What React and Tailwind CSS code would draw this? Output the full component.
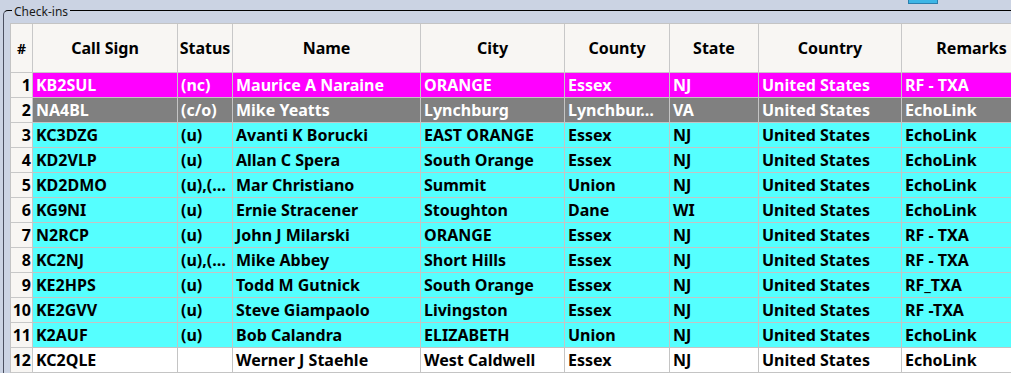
import React from "react";

const cols = "grid-cols-[22px_145px_55px_188px_144px_105px_89px_143px_140px]";

const headers = ["Call Sign", "Status", "Name", "City", "County", "State", "Country", "Remarks"];

const rows = [
  ["KB2SUL", "(nc)", "Maurice A Naraine", "ORANGE", "Essex", "NJ", "United States", "RF - TXA", "m"],
  ["NA4BL", "(c/o)", "Mike Yeatts", "Lynchburg", "Lynchbur…", "VA", "United States", "EchoLink", "g"],
  ["KC3DZG", "(u)", "Avanti K Borucki", "EAST ORANGE", "Essex", "NJ", "United States", "EchoLink", "c"],
  ["KD2VLP", "(u)", "Allan C Spera", "South Orange", "Essex", "NJ", "United States", "EchoLink", "c"],
  ["KD2DMO", "(u),(…", "Mar Christiano", "Summit", "Union", "NJ", "United States", "EchoLink", "c"],
  ["KG9NI", "(u)", "Ernie Stracener", "Stoughton", "Dane", "WI", "United States", "EchoLink", "c"],
  ["N2RCP", "(u)", "John J Milarski", "ORANGE", "Essex", "NJ", "United States", "RF - TXA", "c"],
  ["KC2NJ", "(u),(…", "Mike Abbey", "Short Hills", "Essex", "NJ", "United States", "RF - TXA", "c"],
  ["KE2HPS", "(u)", "Todd M Gutnick", "South Orange", "Essex", "NJ", "United States", "RF_TXA", "c"],
  ["KE2GVV", "(u)", "Steve Giampaolo", "Livingston", "Essex", "NJ", "United States", "RF -TXA", "c"],
  ["K2AUF", "(u)", "Bob Calandra", "ELIZABETH", "Union", "NJ", "United States", "EchoLink", "c"],
  ["KC2QLE", "", "Werner J Staehle", "West Caldwell", "Essex", "NJ", "United States", "EchoLink", "w"],
];

const rowStyle = {
  m: "bg-[#ff00ff] text-white",
  g: "bg-[#808080] text-white",
  c: "bg-[#55ffff] text-black",
  w: "bg-white text-black",
};

export default function App() {
  return (
    <div className="w-[1011px] h-[373px] overflow-hidden bg-[#cbd3e3] font-['Noto_Sans',sans-serif]">
      <div className="h-[2px] flex">
        <div className="ml-[908px] w-[30px] h-[4px] bg-[#3db6e6] border-x border-b border-[#2b7fae] relative z-10" />
      </div>
      <fieldset className="ml-[3px] w-[1070px] border-t border-l border-r-0 border-b-0 border-t-black border-l-[#4b5060] rounded-tl-[5px] pl-[6px] pt-[5px] pb-0 pr-0 m-0">
        <legend className="ml-[2px] px-[2px] pt-[3px] text-[12px] leading-[13px] text-[#1a1a1a]">Check-ins</legend>
        <div className="border-l border-t border-[#c4c4c4] w-[1031px]">
          <div className={`grid ${cols} h-[49px] bg-[#f8f6f3] text-black font-bold text-[16px]`}>
            <div className="flex items-center justify-center border-r border-b border-[#c8c8c8] text-[14px]">#</div>
            {headers.map((h) => (
              <div key={h} className="flex items-center justify-center border-r border-b border-[#c8c8c8]">
                {h}
              </div>
            ))}
          </div>
          {rows.map((r, i) => (
            <div key={i} className={`grid ${cols} h-[25px] font-bold text-[16px] leading-[24px]`}>
              <div className="flex items-center justify-end pr-[1px] bg-[#f8f6f3] text-black border-r border-b border-[#c8c8c8]">
                {i + 1}
              </div>
              {r.slice(0, 8).map((v, j) => (
                <div
                  key={j}
                  className={`${rowStyle[r[8]]} pl-[3px] whitespace-nowrap overflow-hidden border-r border-b border-[#c4c4c4]`}
                >
                  {v}
                </div>
              ))}
            </div>
          ))}
        </div>
      </fieldset>
    </div>
  );
}
